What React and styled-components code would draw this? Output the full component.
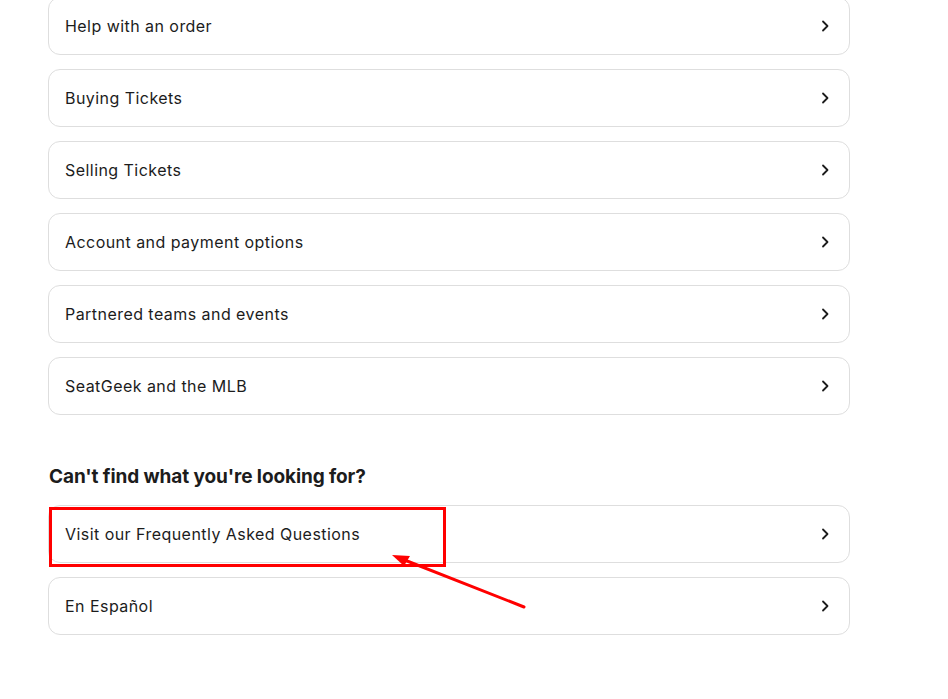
import React from "react";
import styled, { createGlobalStyle } from "styled-components";

const Global = createGlobalStyle`
  html, body { margin: 0; padding: 0; background: #fff; }
  body { font-family: Inter, "Noto Sans", Arial, sans-serif; color: #1c1c1c; }
`;

const Page = styled.div`
  width: 948px;
  height: 699px;
  overflow: hidden;
  background: #fff;
`;

const Column = styled.div`
  width: 802px;
  margin: -3px 0 0 48px;
  display: flex;
  flex-direction: column;
`;

const List = styled.div`
  display: flex;
  flex-direction: column;
  gap: 14px;
`;

const Row = styled.a`
  position: relative;
  box-sizing: border-box;
  height: 58px;
  display: flex;
  align-items: center;
  justify-content: space-between;
  padding: 0 20px 0 16px;
  border: 1px solid #dedede;
  border-radius: 12px;
  background: #fff;
  color: #1c1c1c;
  font-size: 16px;
  letter-spacing: 0.45px;
  text-decoration: none;
`;

const Heading = styled.h2`
  margin: 49px 0 15px 1px;
  font-size: 19px;
  font-weight: 700;
  line-height: 26px;
  letter-spacing: -0.1px;
  color: #1c1c1c;
`;

const Highlight = styled.div`
  position: absolute;
  left: 0;
  top: 1px;
  width: 397px;
  height: 60px;
  box-sizing: border-box;
  border: 3px solid #ff0000;
  pointer-events: none;
  z-index: 2;
`;

const ArrowSvg = styled.svg`
  position: absolute;
  left: 281px;
  top: 39px;
  overflow: visible;
  z-index: 3;
`;

const Chevron = () => (
  <svg width="8" height="12" viewBox="0 0 8 12" fill="none">
    <path d="M2 1.5 L6.5 6 L2 10.5" stroke="#1c1c1c" strokeWidth="1.8" strokeLinecap="round" strokeLinejoin="round" />
  </svg>
);

const topics = [
  "Help with an order",
  "Buying Tickets",
  "Selling Tickets",
  "Account and payment options",
  "Partnered teams and events",
  "SeatGeek and the MLB",
];

export default function App() {
  return (
    <Page>
      <Global />
      <Column>
        <List>
          {topics.map((t) => (
            <Row key={t} href="#">
              <span>{t}</span>
              <Chevron />
            </Row>
          ))}
        </List>
        <Heading>Can't find what you're looking for?</Heading>
        <List>
          <Row href="#">
            <span>Visit our Frequently Asked Questions</span>
            <Chevron />
            <Highlight />
            <ArrowSvg width="200" height="80" viewBox="0 0 200 80">
              <line x1="194" y1="62" x2="72" y2="14" stroke="#ff0000" strokeWidth="3" strokeLinecap="round" />
              <polygon points="62,10 80,11 74,21" fill="#ff0000" />
            </ArrowSvg>
          </Row>
          <Row href="#">
            <span>En Español</span>
            <Chevron />
          </Row>
        </List>
      </Column>
    </Page>
  );
}
